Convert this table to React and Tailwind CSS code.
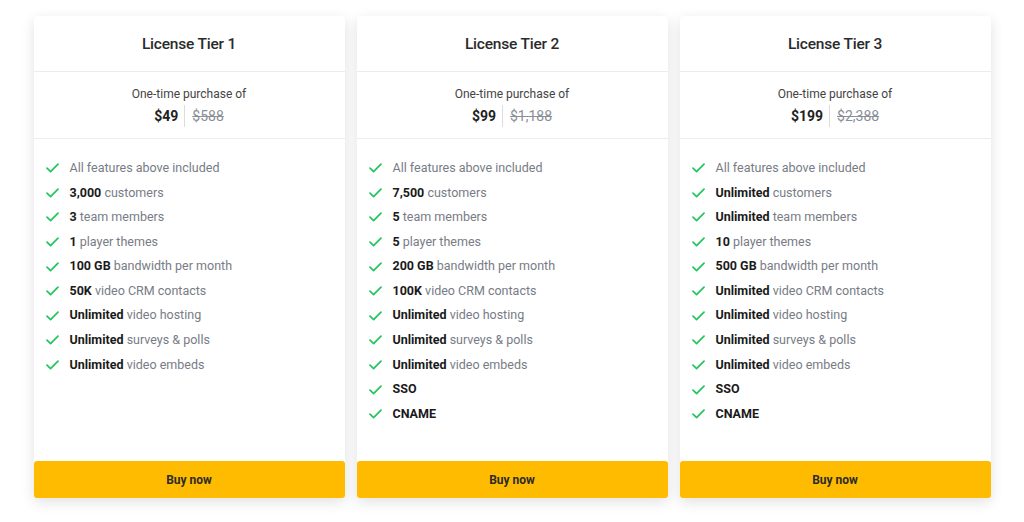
const tiers = [
  {
    name: "License Tier 1",
    price: "$49",
    old: "$588",
    features: [
      ["", "All features above included"],
      ["3,000", "customers"],
      ["3", "team members"],
      ["1", "player themes"],
      ["100 GB", "bandwidth per month"],
      ["50K", "video CRM contacts"],
      ["Unlimited", "video hosting"],
      ["Unlimited", "surveys & polls"],
      ["Unlimited", "video embeds"],
    ],
  },
  {
    name: "License Tier 2",
    price: "$99",
    old: "$1,188",
    features: [
      ["", "All features above included"],
      ["7,500", "customers"],
      ["5", "team members"],
      ["5", "player themes"],
      ["200 GB", "bandwidth per month"],
      ["100K", "video CRM contacts"],
      ["Unlimited", "video hosting"],
      ["Unlimited", "surveys & polls"],
      ["Unlimited", "video embeds"],
      ["SSO", ""],
      ["CNAME", ""],
    ],
  },
  {
    name: "License Tier 3",
    price: "$199",
    old: "$2,388",
    features: [
      ["", "All features above included"],
      ["Unlimited", "customers"],
      ["Unlimited", "team members"],
      ["10", "player themes"],
      ["500 GB", "bandwidth per month"],
      ["Unlimited", "video CRM contacts"],
      ["Unlimited", "video hosting"],
      ["Unlimited", "surveys & polls"],
      ["Unlimited", "video embeds"],
      ["SSO", ""],
      ["CNAME", ""],
    ],
  },
];

function Check() {
  return (
    <svg width="13" height="10" viewBox="0 0 13 10" fill="none" className="shrink-0">
      <path d="M1 5.2 L4.6 8.6 L12 1.2" stroke="#22c55e" strokeWidth="1.7" strokeLinecap="round" strokeLinejoin="round" />
    </svg>
  );
}

function Card({ tier }) {
  return (
    <div className="flex flex-col w-[311px] bg-white rounded-sm shadow-[0_4px_14px_rgba(0,0,0,0.12)]">
      <div className="h-[56px] flex items-center justify-center border-b border-[#ececec] pt-[2px]">
        <h2 className="text-[15.5px] font-medium text-[#2b2b2b] tracking-[-0.2px]">{tier.name}</h2>
      </div>
      <div className="h-[67px] flex flex-col items-center justify-center border-b border-[#ececec] pt-[1px]">
        <div className="text-[12px] text-[#444]">One-time purchase of</div>
        <div className="flex items-center mt-[2px]">
          <span className="text-[14px] font-bold text-[#222] pr-[6px] border-r border-[#dcdcdc] leading-[22px]">{tier.price}</span>
          <span className="text-[14px] text-[#8a8f98] line-through pl-[7px] leading-[22px]">{tier.old}</span>
        </div>
      </div>
      <ul className="flex flex-col pt-[17px] pl-[12px] h-[322px]">
        {tier.features.map(([b, t], i) => (
          <li key={i} className="flex items-center h-[24.6px] gap-[11px] text-[12.5px]">
            <Check />
            <span className="text-[#777c85]">
              {b && <b className="font-bold text-[#1a1a1a]">{b}</b>}
              {b && t ? " " : ""}
              {t}
            </span>
          </li>
        ))}
      </ul>
      <button className="h-[37px] bg-[#ffbb00] rounded-[3px] text-[12px] font-bold text-[#2b2b2b]">Buy now</button>
    </div>
  );
}

export default function App() {
  return (
    <div className="w-[1024px] h-[522px] bg-white flex items-start justify-center gap-[12px] pt-[16px] font-['Roboto',sans-serif]">
      {tiers.map((t) => (
        <Card key={t.name} tier={t} />
      ))}
    </div>
  );
}
